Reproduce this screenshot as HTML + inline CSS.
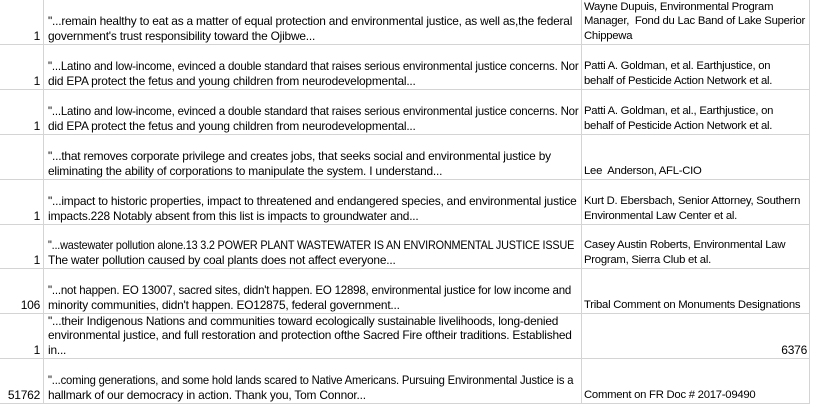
<!DOCTYPE html><html><head><style>
body{margin:0;width:813px;height:406px;background:#fff;overflow:hidden;font-family:"Liberation Sans",sans-serif;font-size:11.3px;letter-spacing:-0.25px;color:#000}
.r{position:absolute;left:0;width:810px;border-bottom:1px solid #d4d4d4}
.v{position:absolute;top:0;height:404px;width:1px;background:#d4d4d4}
.c{position:absolute;bottom:1px;line-height:14.3px;white-space:nowrap}
.n{left:0;width:40px;text-align:right;font-size:12px}
.t{left:48px;font-size:11.9px;letter-spacing:-0.2px}
.a{left:584px}
.ar{left:584px;width:223px;text-align:right;font-size:12px}
.sq{display:inline-block;transform:scaleX(0.91);transform-origin:left}
.s7{display:inline-block;transform:scaleX(0.965);transform-origin:left}
.s5{display:inline-block;transform:scaleX(0.945);transform-origin:left}
</style></head><body>
<div class="v" style="left:43px"></div><div class="v" style="left:581px"></div><div class="v" style="left:809px"></div>
<div class="r" style="top:0;height:44px"><div class="c n">1</div><div class="c t">"...remain healthy to eat as a matter of equal protection and environmental justice, as well as,the federal<br>government's trust responsibility toward the Ojibwe...</div><div class="c a"> Wayne Dupuis, Environmental Program<br>Manager,&nbsp; Fond du Lac Band of Lake Superior<br>Chippewa</div></div>
<div class="r" style="top:45px;height:44px"><div class="c n">1</div><div class="c t"><span class="s7">"...Latino and low-income, evinced a double standard that raises serious environmental justice concerns. Nor</span><br>did EPA protect the fetus and young children from neurodevelopmental...</div><div class="c a"> Patti A. Goldman, et al. Earthjustice, on<br>behalf of Pesticide Action Network et al.</div></div>
<div class="r" style="top:90px;height:44px"><div class="c n">1</div><div class="c t"><span class="s7">"...Latino and low-income, evinced a double standard that raises serious environmental justice concerns. Nor</span><br>did EPA protect the fetus and young children from neurodevelopmental...</div><div class="c a"> Patti A. Goldman, et al., Earthjustice, on<br>behalf of Pesticide Action Network et al.</div></div>
<div class="r" style="top:135px;height:44px"><div class="c t">"...that removes corporate privilege and creates jobs, that seeks social and environmental justice by<br>eliminating the ability of corporations to manipulate the system. I understand...</div><div class="c a">Lee&nbsp; Anderson, AFL-CIO</div></div>
<div class="r" style="top:180px;height:44px"><div class="c n">1</div><div class="c t">"...impact to historic properties, impact to threatened and endangered species, and environmental justice<br>impacts.228 Notably absent from this list is impacts to groundwater and...</div><div class="c a"> Kurt D. Ebersbach, Senior Attorney, Southern<br>Environmental Law Center et al.</div></div>
<div class="r" style="top:225px;height:43px"><div class="c n">1</div><div class="c t"><span class="sq">"...wastewater pollution alone.13 3.2 POWER PLANT WASTEWATER IS AN ENVIRONMENTAL JUSTICE ISSUE</span><br>The water pollution caused by coal plants does not affect everyone...</div><div class="c a"> Casey Austin Roberts, Environmental Law<br>Program, Sierra Club et al.</div></div>
<div class="r" style="top:269px;height:44px"><div class="c n">106</div><div class="c t"><span class="s7">"...not happen. EO 13007, sacred sites, didn't happen. EO 12898, environmental justice for low income and</span><br>minority communities, didn't happen. EO12875, federal government...</div><div class="c a">Tribal Comment on Monuments Designations</div></div>
<div class="r" style="top:314px;height:44px"><div class="c n">1</div><div class="c t">"...their Indigenous Nations and communities toward ecologically sustainable livelihoods, long-denied<br>environmental justice, and full restoration and protection ofthe Sacred Fire oftheir traditions. Established<br>in...</div><div class="c ar">6376</div></div>
<div class="r" style="top:359px;height:44px"><div class="c n">51762</div><div class="c t"><span class="s5">"...coming generations, and some hold lands scared to Native Americans. Pursuing Environmental Justice is a</span><br>hallmark of our democracy in action. Thank you, Tom Connor...</div><div class="c a">Comment on FR Doc # 2017-09490</div></div>
</body></html>
